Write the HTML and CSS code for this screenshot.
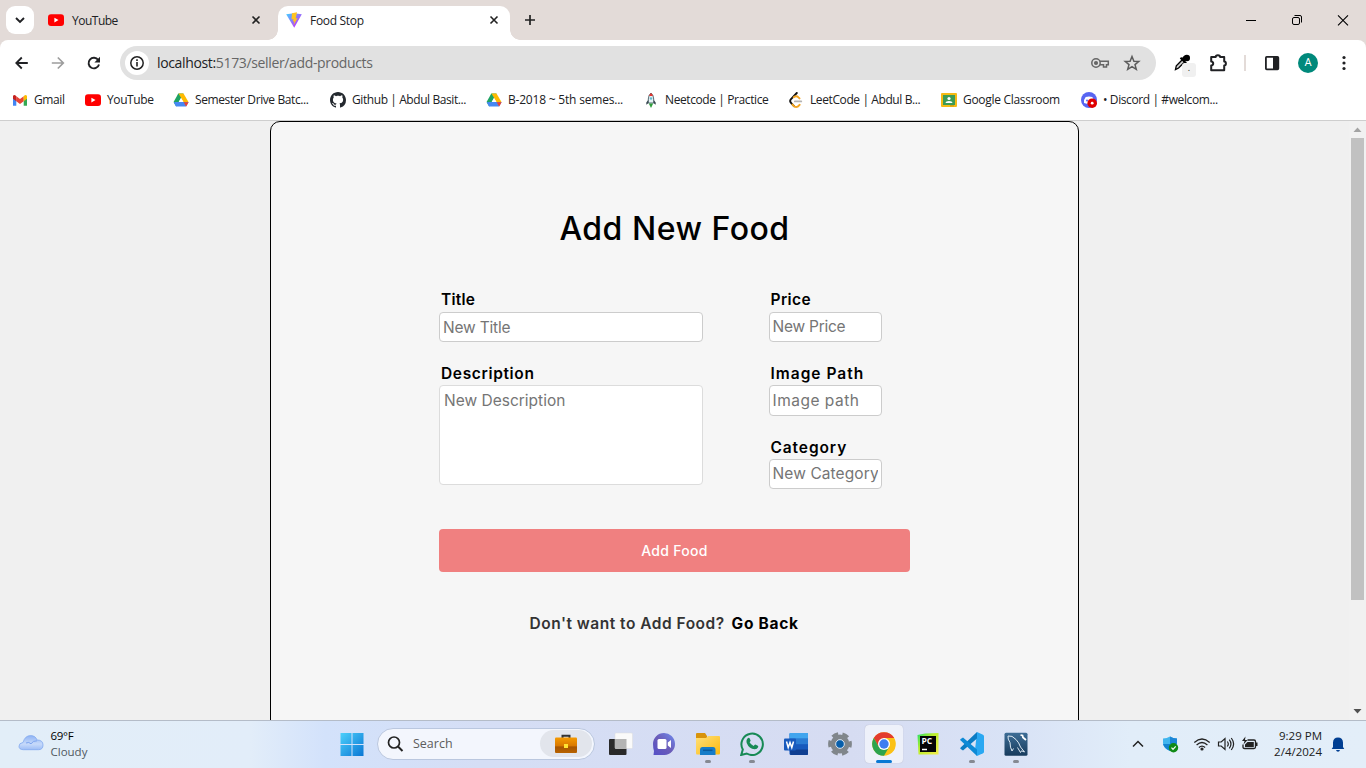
FILE: index.html
```html
<!DOCTYPE html>
<html lang="en">
<head>
<meta charset="utf-8">
<title>Food Stop</title>
<link rel="stylesheet" href="styles.css">
</head>
<body>
<svg width="0" height="0" class="defs" aria-hidden="true">
  <defs>
    <linearGradient id="vp" x1="0" y1="0" x2="1" y2="1"><stop offset="0" stop-color="#41d1ff"/><stop offset=".7" stop-color="#b04cfa"/><stop offset="1" stop-color="#bd34fe"/></linearGradient>
    <linearGradient id="win" x1="0" y1="0" x2="1" y2="1"><stop offset="0" stop-color="#4cd0fb"/><stop offset="1" stop-color="#0a76d4"/></linearGradient>
    <linearGradient id="cloud" x1="0" y1="0" x2="0" y2="1"><stop offset="0" stop-color="#8fb4f5"/><stop offset=".6" stop-color="#c7dafa"/><stop offset="1" stop-color="#9dbdf6"/></linearGradient>
    <linearGradient id="case" x1="0" y1="0" x2="0" y2="1"><stop offset="0" stop-color="#f59a00"/><stop offset=".55" stop-color="#d87800"/><stop offset=".6" stop-color="#a65400"/><stop offset="1" stop-color="#b86300"/></linearGradient>
    <linearGradient id="chat" x1="0" y1="1" x2="1" y2="0"><stop offset="0" stop-color="#5450c8"/><stop offset=".5" stop-color="#6b5cb8"/><stop offset="1" stop-color="#6f8cf0"/></linearGradient>
    <linearGradient id="fold" x1="0" y1="0" x2="1" y2="1"><stop offset="0" stop-color="#ffe07a"/><stop offset="1" stop-color="#fcb90e"/></linearGradient>
    <linearGradient id="py" x1="0" y1="0" x2="1" y2="1"><stop offset="0" stop-color="#21e06b"/><stop offset=".4" stop-color="#b8ee2b"/><stop offset="1" stop-color="#f4ec4c"/></linearGradient>
    <linearGradient id="sql" x1="0" y1="0" x2="0" y2="1"><stop offset="0" stop-color="#3d6d96"/><stop offset="1" stop-color="#173b5c"/></linearGradient>
    <symbol id="yt" viewBox="0 0 16 16"><rect y="2.3" width="16" height="11.6" rx="3" fill="#f00"/><path d="M6.4 5.7v4.8l4.1-2.4z" fill="#fff"/></symbol>
    <symbol id="drive" viewBox="0 0 16 16"><path d="M5.3 1.5h5.2L3.1 14.4.6 10.1z" fill="#1ea362"/><path d="M5.5 1.5h5L15.6 10.2h-5z" fill="#ffba00"/><path d="M3.2 10.1h12.4L13 14.4H3.1L.7 10.2z" fill="#4688f4"/><path d="M10.6 10.2h5L13.2 14.4z" fill="#ea4335"/><path d="M8 6.2 10.3 10.1H5.8z" fill="#fff"/></symbol>
    <symbol id="close" viewBox="0 0 16 16"><path d="M4.5 4.5l7 7m0-7l-7 7" stroke="#222" stroke-width="1.6"/></symbol>
  </defs>
</svg>
<div class="window">
  <header class="tabstrip">
    <div class="tabsearch"><svg width="28" height="28"><path d="M10 12l4 4 4-4" fill="none" stroke="#202124" stroke-width="1.9"/></svg></div>
    <div class="tab">
      <svg width="16" height="16"><use href="#yt"/></svg><span class="tabname t-yt">YouTube</span><svg width="16" height="16"><use href="#close"/></svg>
    </div>
    <div class="tab active">
      <svg width="16" height="16" viewBox="0 0 16 16"><path d="M.2 2.3 8 1.300l7.800 1L8.200 15.800z" fill="url(#vp)"/><path d="M11 .2 6 1.300l-.5 6.200 1.900-.4-.5 2.500 1.400-.4-.7 3.700 4.100-6.900-2 .4z" fill="#ffc41e"/></svg><span class="tabname t-food">Food Stop</span><svg width="16" height="16"><use href="#close"/></svg>
    </div>
    <svg class="newtab" width="16" height="16"><path d="M8 3v10M3 8h10" stroke="#222" stroke-width="1.7"/></svg>
    <div class="controls">
      <svg width="46" height="40"><path d="M18 20.5h10" stroke="#000"/></svg>
      <svg width="46" height="40"><rect x="18.5" y="17.5" width="7" height="7" rx="1.5" fill="none" stroke="#000"/><path d="M20.5 15.5H26q1.500 0 1.500 1.500v5.500" fill="none" stroke="#000"/></svg>
      <svg width="46" height="40"><path d="M18 15.300l10 10m0-10l-10 10" stroke="#000" stroke-width="1.100"/></svg>
    </div>
  </header>
  <div class="toolbar">
    <svg width="36" height="46"><path d="M17.800 17.500 12.300 23l5.500 5.500M12.300 23h11.500" fill="none" stroke="#202124" stroke-width="1.800"/></svg>
    <svg width="36" height="46"><path d="M17.800 17.500 23.300 23l-5.500 5.500M23.300 23h-11.500" fill="none" stroke="#9d9d9d" stroke-width="1.700"/></svg>
    <svg width="36" height="46"><path d="M22.200 20A5.300 5.300 0 1 0 23 24.500" fill="none" stroke="#202124" stroke-width="1.900"/><path d="M24 16.800v5.600h-5.600z" fill="#202124"/></svg>
    <div class="omnibox">
      <div class="info"><svg width="24" height="24"><circle cx="12" cy="12" r="6.200" fill="none" stroke="#222" stroke-width="1.500"/><path d="M12 11v4.500M12 8.300v1.700" stroke="#222" stroke-width="1.600"/></svg></div>
      <span class="url"><b>localhost:</b>5173/seller/add-products</span>
      <svg width="20" height="20" viewBox="0 0 20 20" fill="none" stroke="#666" stroke-width="1.500"><circle cx="6" cy="10" r="4.200"/><circle cx="6" cy="10" r="1.300" fill="#666"/><path d="M10 8.300h8.300v3.400h-1.800v2.400h-3v-2.400H10"/></svg>
      <svg class="star" width="20" height="20" viewBox="0 0 20 20"><path d="M10 3.500l1.900 4.700 4.900.3-3.800 3.100 1.300 4.800L10 13.700l-4.300 2.700L7 11.600 3.200 8.500l4.900-.3z" fill="none" stroke="#5c5c5c" stroke-width="1.500"/></svg>
    </div>
    <div class="picker"><svg width="24" height="30"><path d="M5.500 21.500l.8-3.800 6-6 2.300 2.300-6 6z" fill="#ccc" stroke="#000" stroke-width="1.300"/><path d="M10.500 9.700l5.700 5.700" stroke="#000" stroke-width="2"/><path d="M13 12.200l2.500-2.500" stroke="#000" stroke-width="4.500"/><circle cx="16.800" cy="10" r="3.200" fill="#000"/></svg><span class="badge">.</span></div>
    <svg class="puzzle" width="22" height="22" viewBox="0 0 22 22"><path d="M4.200 5h4.500q0-1.800 2.200-1.800T13.100 5h4.100v4.500q1.700 0 1.700 2t-1.700 2v4.700h-13v-4.700q2-.2 2-2t-2-2z" fill="none" stroke="#202124" stroke-width="2" stroke-linejoin="round"/></svg>
    <i class="divider"></i>
    <svg class="panel" width="16" height="16"><rect x="1.900" y="1.900" width="12.400" height="12.400" rx=".8" fill="none" stroke="#202124" stroke-width="1.800"/><path d="M9 2h5v12H9z" fill="#202124"/></svg>
    <span class="avatar">A</span>
    <svg class="dots" width="16" height="16" fill="#202124"><circle cx="8" cy="2.500" r="1.600"/><circle cx="8" cy="8" r="1.600"/><circle cx="8" cy="13.500" r="1.600"/></svg>
  </div>
  <nav class="bookmarks">
    <a><svg width="16" height="16"><path d="M1 13.700V4l3.300 2.500v7.200z" fill="#4285f4"/><path d="M11.700 6.500 15 4v9.700h-3.300z" fill="#34a853"/><path d="M4.300 9.200V4.300L8 7l3.700-2.700v4.900L8 12z" fill="#ea4335"/><path d="M1 6.700V4q1.200-2 3.300.3v4.900z" fill="#c5221f"/><path d="M15 6.700V4q-1.200-2-3.300.3v4.900z" fill="#fbbc04"/></svg><span class="bm-gm">Gmail</span></a>
    <a><svg width="16" height="16"><use href="#yt"/></svg><span class="bm-yt">YouTube</span></a>
    <a><svg width="16" height="16"><use href="#drive"/></svg><span class="bm-sem">Semester Drive Batc...</span></a>
    <a><svg width="16" height="16" viewBox="0 0 16 16"><path fill="#24292f" d="M8 0C3.580 0 0 3.580 0 8c0 3.540 2.290 6.530 5.470 7.590.4.070.55-.17.55-.38 0-.19-.01-.82-.01-1.490-2.010.37-2.530-.49-2.690-.94-.09-.23-.48-.94-.82-1.130-.28-.15-.68-.52-.01-.53.63-.01 1.080.58 1.230.82.72 1.210 1.870.87 2.330.66.07-.52.28-.87.51-1.070-1.780-.2-3.640-.89-3.640-3.950 0-.87.31-1.590.82-2.150-.08-.2-.36-1.020.08-2.120 0 0 .67-.21 2.200.82.64-.18 1.320-.27 2-.27s1.360.09 2 .27c1.530-1.040 2.200-.82 2.200-.82.44 1.100.16 1.920.08 2.120.51.56.82 1.270.82 2.150 0 3.070-1.870 3.750-3.650 3.950.29.25.54.73.54 1.480 0 1.070-.01 1.930-.01 2.200 0 .21.15.46.55.38A8.010 8.010 0 0 0 16 8c0-4.420-3.580-8-8-8z"/></svg><span class="bm-git">Github | Abdul Basit...</span></a>
    <a><svg width="16" height="16"><use href="#drive"/></svg><span class="bm-b">B-2018 ~ 5th semes...</span></a>
    <a><svg width="16" height="16"><path d="M8 1Q5.500 3 5.300 7v4h5.400V7Q10.500 3 8 1z" fill="#e6f2f5" stroke="#455a64" stroke-width=".9"/><path d="M6 4q.8-2 2-3 1.200 1 2 3z" fill="#e0342f"/><circle cx="8" cy="6.500" r="1.200" fill="#64b9d0"/><path d="M5.200 8 3.300 10.500v2.200l2-1.500zM10.800 8l1.900 2.500v2.200l-2-1.500z" fill="#37474f"/><path d="M5.800 11.500h4.400L8 16z" fill="#2f9e3d"/></svg><span class="bm-neet">Neetcode | Practice</span></a>
    <a><svg width="16" height="16" fill="none" stroke-linecap="round"><path d="M8.800 1 3 7.100Q1.300 9 3 10.800l3 3.400" stroke="#111" stroke-width="1.900"/><path d="M5.700 5.200q2.700-2 4.800.2l1 1M4.500 12.500l1.500 1.700q2 1.300 3.700.4l2-1.800" stroke="#f5a623" stroke-width="1.900"/><path d="M6.800 9.400h6.500" stroke="#b3b3b3" stroke-width="1.700"/></svg><span class="bm-leet">LeetCode | Abdul B...</span></a>
    <a><svg width="16" height="16"><rect y="1" width="16" height="14" rx="1" fill="#f5ba14"/><rect x="2" y="3" width="12" height="10" fill="#3d9b55"/><circle cx="8" cy="6.500" r="1.600" fill="#fff"/><path d="M4.500 11q.3-2 3.500-2t3.500 2z" fill="#fff"/><path d="M9 13h4v1.500H9z" fill="#d6a00e"/></svg><span class="bm-class">Google Classroom</span></a>
    <a><svg width="16" height="16"><circle cx="8" cy="8" r="8" fill="#5865f2"/><path d="M3 11q-.2-4 1.700-6 3.300-1.200 6.600 0 1.900 2 1.700 6-4 1.800-10 0z" fill="#fff"/><circle cx="6" cy="8.500" r="1" fill="#5865f2"/><circle cx="11.200" cy="11.200" r="4.800" fill="#e00000"/><circle cx="11.200" cy="11.200" r="1.400" fill="#fff"/></svg><span class="bm-disc">• Discord | #welcom...</span></a>
  </nav>
  <div class="viewport">
    <main class="card">
      <h1>Add New Food</h1>
      <form class="form">
        <div class="cols">
          <div class="col left">
            <label class="l-title">Title</label>
            <input class="field p-title" placeholder="New Title">
            <label class="l-desc">Description</label>
            <textarea class="area" placeholder="New Description"></textarea>
          </div>
          <div class="col right">
            <label class="l-price">Price</label>
            <input class="field p-price" placeholder="New Price">
            <label class="l-img">Image Path</label>
            <input class="field tall" placeholder="Image path">
            <label class="l-cat">Category</label>
            <input class="field p-cat" placeholder="New Category">
          </div>
        </div>
        <button type="button">Add Food</button>
      </form>
      <p class="back"><span>Don't want to Add Food?</span><a>Go Back</a></p>
    </main>
    <div class="scrollbar">
      <svg width="17" height="17"><path d="M4.500 11h8L8.500 6.500z" fill="#a3a3a3"/></svg>
      <i class="thumb"></i>
      <svg width="17" height="17"><path d="M4.500 6h8l-4 4.500z" fill="#505050"/></svg>
    </div>
  </div>
  <footer class="taskbar">
    <div class="weather">
      <svg width="26" height="20"><path d="M5.500 15.700q-4.500 0-4.500-3.500 0-3.200 4-3.700Q7 1.600 12.500 1.600q5 0 6.500 4.400 6 0 6 5 0 4.700-4.500 4.700z" fill="url(#cloud)" stroke="#83a9ef" stroke-width=".8"/><path d="M8 9q3-1.500 5 .8 2-3.300 6-3" fill="none" stroke="#7ca4ee" stroke-width="1"/></svg>
      <div><div class="deg">69°F</div><div class="sky">Cloudy</div></div>
    </div>
    <svg class="start" width="24" height="24" viewBox="0 0 24 24"><path d="M.5 1h11v11H.500zM12.500 1h11v11h-11zM.500 13h11v11H.500zM12.500 13h11v11h-11z" fill="url(#win)"/></svg>
    <div class="search"><svg width="20" height="20"><circle cx="8" cy="8.500" r="5.500" fill="none" stroke="#222" stroke-width="1.700"/><path d="M12 12.500l4.500 4.500" stroke="#222" stroke-width="2"/></svg><span>Search</span><div class="brief"><svg width="24" height="20"><path d="M8.500 4V1.800h7V4" fill="none" stroke="#333" stroke-width="2"/><rect x="1" y="3.500" width="22" height="15.500" rx="1" fill="url(#case)"/><rect x="10" y="10" width="4" height="4" fill="#ffe332"/></svg></div></div>
    <div class="apps">
      <div class="app"><svg width="25" height="24"><rect x="1" y="7" width="17.500" height="16" rx="1" fill="#292929"/><rect x="7" y="1" width="17.500" height="15.500" rx="1" fill="#fafafa" stroke="#ddd" stroke-width=".5"/><path d="M7 7h11.500v9.500H7z" fill="#b4b4b4"/></svg></div>
      <div class="app"><svg width="24" height="24"><path d="M1 12A11 11 0 1 1 12.500 23H1.500L2 19Q1 16 1 12z" fill="url(#chat)"/><rect x="5.500" y="7" width="9" height="10" rx="1.500" fill="#fff"/><path d="M15.800 10.500 19 8v8l-3.200-2.500z" fill="#fff"/></svg></div>
      <div class="app run"><svg width="24" height="24"><path d="M0 2q0-1 1-1h8l2 3v4H0z" fill="#d8930b"/><path d="M0 6h10l2-2h11q1 0 1 1v16q0 1.500-1 1.500H1q-1 0-1-1.500z" fill="url(#fold)"/><path d="M4 23v-5q0-3 2.500-3h10.500q2.500 0 2.500 3v5z" fill="#167cc8"/><path d="M7 18.300h9.500" stroke="#0a5a9c" stroke-width="1.500"/></svg></div>
      <div class="app run"><svg width="24" height="24"><path d="M1.200 23 2.800 17.500A10.700 10.700 0 1 1 6.700 21.500z" fill="none" stroke="#178a55" stroke-width="2"/><path d="M8 6q1-.7 1.600.3l1 2.200q0 .8-1 1.700 1.300 2.500 4 3.800l1.200-1.300q.4-.5 1 0l2 1.100q.7.400.3 1.400-1 2.200-3.400 2.100Q9 16.800 6.700 11 5.900 7.500 8 6z" fill="#178a55"/></svg></div>
      <div class="app"><svg width="24" height="24"><rect x="5.500" y="1" width="18.500" height="22" rx="1.500" fill="#185abd"/><path d="M5.500 1H24v5.700H5.500z" fill="#41a5ee"/><path d="M5.500 6.700H24v5.500H5.500z" fill="#2b7cd3"/><path d="M5.500 17.500H24V22q0 1-1 1H6.500z" fill="#103f91"/><rect x="0" y="6.500" width="12" height="12" rx="1" fill="#185abd"/><path d="M2.500 9.500 4.200 15.500 6 10.500 7.800 15.500 9.500 9.500" fill="none" stroke="#fff" stroke-width="1.500"/></svg></div>
      <div class="app"><svg width="24" height="24"><circle cx="12" cy="12" r="9.900" fill="none" stroke="#80868b" stroke-width="4" stroke-dasharray="6.200 4.167" stroke-dashoffset="3.100"/><circle cx="12" cy="12" r="6.900" fill="none" stroke="#80868b" stroke-width="5"/><circle cx="12" cy="12" r="4.300" fill="#075eaa" stroke="#eef4fa" stroke-width=".8"/></svg></div>
      <div class="app current"><svg width="24" height="24"><circle cx="12" cy="12" r="11.800" fill="#fbc116"/><path d="M1.780 6.100A11.800 11.800 0 0 1 22.220 6.100H12L6.900 15z" fill="#e33b2e"/><path d="M1.780 6.100A11.800 11.800 0 0 0 12 23.800L17.100 15 6.900 15z" fill="#2da44e"/><circle cx="12" cy="12" r="6" fill="#fff"/><circle cx="12" cy="12" r="4.700" fill="#3d7df0"/></svg></div>
      <div class="app"><svg width="24" height="24"><path d="M1.500 3 9 1.500l13.500-.5v21.500h-20z" fill="url(#py)"/><rect x="4" y="4" width="16" height="16" fill="#050505"/><path d="M6 17.500h5" stroke="#fff" stroke-width="1.500"/><text x="5.500" y="12" class="pc">PC</text></svg></div>
      <div class="app run"><svg width="24" height="24"><path d="M17 0 23 2.800q1 .5 1 1.500V19.700q0 1-1 1.500L17 24 15 18z" fill="#2aa8f2"/><path d="M17 0v6.500L3 18.500.7 17q-1-.7 0-1.500z" fill="#0b7cc4"/><path d="M17 24v-6.500L3 5.500.7 7q-1 .7 0 1.500z" fill="#0e8ad6"/></svg></div>
      <div class="app run"><svg width="24" height="24"><rect x=".5" y=".8" width="23" height="23" rx="1.500" fill="url(#sql)"/><path d="M4 4Q8 3 12 7.500q3 3 4.500 7.500l4 5-3-1.200-1 1.700-3-5M4 4q-.5 3 2 6.500 0 5 2 8.500l1.500-2.500" fill="none" stroke="#dce8f2" stroke-width="1"/><path d="M16.500 3l2 .5.500 2 3 2.500" fill="none" stroke="#fff" stroke-width="1.800"/></svg></div>
    </div>
    <div class="tray">
      <svg width="12" height="12"><path d="M1 8.500 6 3.500l5 5" fill="none" stroke="#222" stroke-width="1.500"/></svg>
      <svg class="shield" width="17" height="18"><path d="M1 3.500Q5 3.500 8 1.500q3 2 7 2V8q0 5-7 8-7-3-7-8z" fill="#41b5ee"/><path d="M8 1.500q3 2 7 2V9H8z" fill="#1d86d6"/><path d="M1 9h7v7Q2 13 1 9z" fill="#1483d0"/><circle cx="11.500" cy="12.700" r="4.700" fill="#0f8a16"/><path d="M9.500 12.700l1.500 1.600 2.700-2.900" fill="none" stroke="#fff" stroke-width="1.200"/></svg>
      <svg class="wifi" width="18" height="16" fill="none" stroke="#222" stroke-width="1.200"><path d="M1.300 6.500q7.700-7 15.400 0M3.600 9q5.400-5 10.800 0M5.900 11.500q3.100-2.700 6.200 0"/><circle cx="9" cy="13" r="1" fill="#222"/></svg>
      <svg class="vol" width="18" height="16" fill="none" stroke="#222" stroke-width="1.200"><path d="M1.500 6h2.700L8 2.500v11L4.200 10H1.500zM10.300 5.500q2 2.500 0 5M12.300 3.700q3.300 4.300 0 8.600M14.300 2q4.600 6 0 12"/></svg>
      <svg class="bat" width="18" height="16"><path d="M6.500 4H13q1.500 0 1.500 1.500V11q0 1.500-1.500 1.500H3.500Q2 12.500 2 11V8.500" fill="none" stroke="#222" stroke-width="1.300"/><path d="M6.500 6h6.300v5H4V8.500zM15 6.500h1.500V10H15z" fill="#222"/><path d="M4.500.5 1 5h2.500l-1 3.500L6.500 4H4z" fill="#222"/></svg>
      <div class="clock"><div class="time">9:29 PM</div><div class="date">2/4/2024</div></div>
      <svg class="bell" width="14" height="16"><path d="M2 11V6.500Q2.300 1.500 7 1.500t5 5V11l1.300 2H.7zM5 14h4q-.5 1.700-2 1.700T5 14z" fill="#003e92"/></svg>
    </div>
  </footer>
</div>
</body>
</html>
```
FILE: styles.css
```css
* { box-sizing: border-box; }
body { margin: 0; overflow: hidden; font-family: "Open Sans", "Noto Sans", sans-serif; font-size: 12px; color: #202124; }
.defs { position: absolute; }
svg { display: block; flex: none; }
.window { width: 1366px; height: 768px; display: flex; flex-direction: column; background: #e3dbd8; }

.tabstrip { height: 40px; display: flex; align-items: flex-start; padding-left: 6px; }
.tabsearch { width: 28px; height: 28px; margin-top: 6px; border-radius: 9px; background: #fff; }
.tab { display: flex; align-items: center; height: 34px; margin-top: 6px; padding: 0 14px 6px; width: 244px; }
.tab.active { position: relative; width: 232px; padding: 0 8px 6px; background: #fff; border-radius: 10px 10px 0 0; }
.tab.active::before, .tab.active::after { content: ""; position: absolute; bottom: 0; width: 10px; height: 10px; }
.tab.active::before { left: -10px; background: radial-gradient(circle at 0 0, transparent 9.5px, #fff 10px); }
.tab.active::after { right: -10px; background: radial-gradient(circle at 100% 0, transparent 9.5px, #fff 10px); }
.tabname { flex: 1; padding-left: 8px; white-space: nowrap; }
.t-yt { letter-spacing: -.5px; }
.t-food { letter-spacing: -.3px; }
.newtab { margin: 12px 0 0 12px; }
.controls { display: flex; margin-left: auto; }

.toolbar { height: 46px; display: flex; align-items: center; padding-left: 4px; background: #fff; border-radius: 8px 8px 0 0; }
.omnibox { display: flex; align-items: center; width: 1036px; height: 34px; margin-left: 8px; padding: 0 14px 0 5px; border-radius: 17px; background: #e1e1e1; }
.info { width: 24px; height: 24px; border-radius: 50%; background: #fff; }
.url { flex: 1; padding: 0 0 1px 8px; font-size: 14px; letter-spacing: -.35px; color: #666; }
.url b { font-weight: 400; color: #202124; }
.star { margin-left: 12px; }
.picker { position: relative; width: 24px; height: 30px; margin-left: 14px; }
.badge { position: absolute; left: 12px; top: 15px; width: 14px; height: 14px; border-radius: 3px; background: #f0f0f0; font-size: 9px; line-height: 10px; text-align: center; }
.puzzle { margin-left: 13px; }
.divider { width: 2px; height: 16px; margin-left: 15px; background: #e3dbd8; }
.panel { margin-left: 18px; }
.avatar { width: 20px; height: 20px; margin-left: 18px; border-radius: 50%; background: #00897b; color: #fff; font: 11px/20px Roboto, sans-serif; text-align: center; }
.dots { margin-left: 18px; }

.bookmarks { display: grid; grid-template-columns: 73px 88px 157px 156px 157px 145px 153px 140px 160px; align-items: center; height: 35px; padding: 0 0 6px 12px; background: #fff; border-bottom: 1px solid #cecece; }
.bookmarks a { display: flex; align-items: center; gap: 6px; white-space: nowrap; letter-spacing: -.4px; }
.bookmarks span { padding-bottom: 2px; }
.bookmarks .bm-git { letter-spacing: -.42px; }
.bookmarks .bm-b { letter-spacing: -.2px; }
.bookmarks .bm-class { letter-spacing: -.3px; }

.viewport { height: 599px; display: flex; overflow: hidden; background: #f0f0f0; }
.card { width: 809px; height: 640px; margin-left: 270px; padding-top: 83px; background: #f6f6f6; border: 1px solid #000; border-radius: 10px 10px 0 0; font-family: Inter, sans-serif; color: #000; }
h1 { margin: 0; height: 48px; font-size: 32px; line-height: 48px; font-weight: 500; letter-spacing: .5px; text-align: center; }
.form { width: 471px; margin: 35px 0 0 168px; }
.cols { display: flex; gap: 66px; height: 241px; }
.col { display: flex; flex-direction: column; }
.left { width: 264px; }
.right { width: 113px; }
label { height: 24px; padding-left: 2px; font-size: 15.500px; line-height: 24px; font-weight: 600; white-space: nowrap; }
.right label { padding-left: 1.500px; }
.l-title { letter-spacing: .2px; }
.l-price { letter-spacing: .4px; }
.l-desc { letter-spacing: .65px; line-height: 25px; }
.l-img { letter-spacing: 1px; line-height: 25px; }
.l-cat { letter-spacing: .9px; line-height: 25px; }
.field { width: 100%; height: 30px; margin: 0 0 19px; padding: 0 3px; border: 1px solid #ccc; border-radius: 4px; background: #fff; font: 15.500px Inter, sans-serif; }
.right .field { padding: 0 3px 1px 2.500px; }
.p-title { letter-spacing: -.2px; }
.p-price { letter-spacing: -.25px; }
.p-cat { letter-spacing: .1px; }
.tall { height: 31px; letter-spacing: .5px; }
.area { width: 100%; height: 100px; padding: 3px 4px; border: 1px solid #dcdcdc; border-radius: 4px; resize: none; font: 15.500px/24px Inter, sans-serif; }
::placeholder { color: #757575; opacity: 1; }
button { display: block; width: 471px; height: 43px; padding: 0 0 1px; border: 0; border-radius: 4px; background: #f08080; color: #fff; font: 500 14px Inter, sans-serif; letter-spacing: .3px; }
.back { display: flex; gap: 7px; margin: 40px 0 0 258.500px; font-size: 15.500px; line-height: 24px; font-weight: 600; letter-spacing: .5px; color: #333; white-space: nowrap; }
.back a { color: #000; font-weight: 700; letter-spacing: .7px; }
.scrollbar { width: 17px; height: 599px; margin-left: auto; background: #f1f1f1; display: flex; flex-direction: column; }
.thumb { width: 13px; height: 462px; margin: 0 0 103px 2px; background: #c1c1c1; flex: none; }

.taskbar { display: flex; align-items: center; height: 48px; padding-bottom: 2px; border-top: 1px solid #b4bcc8; background: linear-gradient(90deg, #e2eef8 0, #e2edf9 250px, #d3e2fb 325px, #d5def5 480px, #d6dcf2 850px, #d9e3f6 1020px, #e1edf9 1130px, #e3eef9 100%); }
.weather { display: flex; align-items: center; gap: 6.500px; width: 321px; padding-left: 18px; font-size: 11.500px; line-height: 16px; }
.deg { color: #000; letter-spacing: -.3px; }
.sky { color: #505860; }
.start { margin-left: 19px; }
.search { display: flex; align-items: center; width: 218px; height: 32px; margin-left: 13px; padding: 0 2px 0 8px; border: 1px solid #bac7df; border-radius: 16px; background: #f3f6fd; font-size: 12.500px; color: #5c5c5c; }
.search span { flex: 1; padding-left: 7px; }
.brief { display: flex; align-items: center; justify-content: center; width: 52px; height: 27px; border-radius: 14px; background: #e2e5ec; }
.apps { display: flex; gap: 6px; margin-left: 6px; }
.app { position: relative; display: flex; align-items: center; justify-content: center; width: 38px; height: 38px; border-radius: 4px; }
.current { background: #eef1fa; box-shadow: 0 0 1px #aab; }
.run::after, .current::after { content: ""; position: absolute; bottom: 0; width: 6px; height: 3px; border-radius: 2px; background: #858992; }
.current::after { width: 16px; background: #0878d4; }
.pc { font: 700 8.500px "Open Sans", sans-serif; fill: #fff; }
.tray { display: flex; align-items: center; margin-left: auto; padding-right: 21px; }
.shield { margin-left: 18px; }
.wifi { margin-left: 14px; }
.vol { margin-left: 6px; }
.bat { margin-left: 6px; }
.clock { width: 63px; text-align: right; font-size: 11.500px; line-height: 16px; color: #202020; }
.bell { margin-left: 9px; }
```
